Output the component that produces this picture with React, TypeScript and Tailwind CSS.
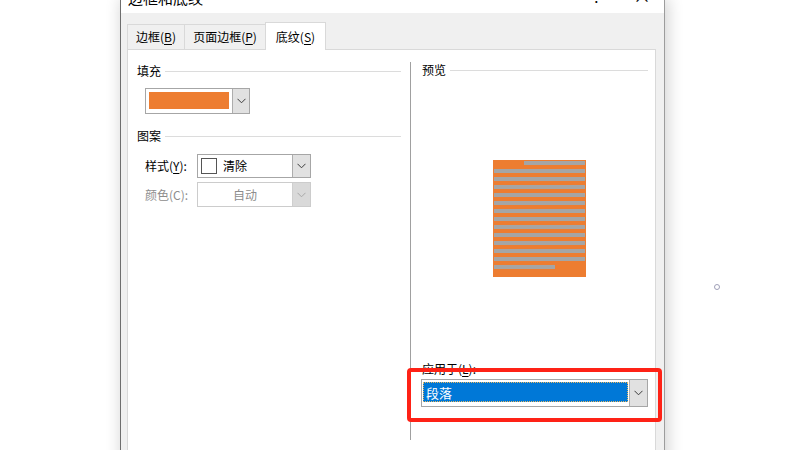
import React from 'react';

function Chevron({ light = false }: { light?: boolean }) {
  return (
    <svg width="9" height="6" viewBox="0 0 9 6" className="block">
      <polyline
        points="0.5,0.8 4.5,4.8 8.5,0.8"
        fill="none"
        stroke={light ? '#a8a8a8' : '#3c3c3c'}
        strokeWidth="1"
      />
    </svg>
  );
}

function SectionHeader({ label, indent, right }: { label: string; indent: string; right: string }) {
  return (
    <div className={`flex items-center h-4 ${indent} ${right}`}>
      <span className="text-[12px] leading-4 text-black">{label}</span>
      <div className="flex-1 h-px bg-[#dcdcdc] ml-1" />
    </div>
  );
}

function ComboButton({ disabled = false }: { disabled?: boolean }) {
  return (
    <div
      className={`w-[18px] flex items-center justify-center border-l ${
        disabled ? 'bg-[#d9d9d9] border-[#cfcfcf]' : 'bg-[#e1e1e1] border-[#adadad]'
      }`}
    >
      <Chevron light={disabled} />
    </div>
  );
}

export default function App() {
  return (
    <div className="relative w-[800px] h-[450px] overflow-hidden bg-white font-['Noto_Sans_CJK_SC',sans-serif]">
      <div className="ml-[120px] w-[545px] h-[480px] flex flex-col bg-[#f0f0f0] border-l border-l-[#6e6e6e] border-r border-r-[#9c9c9c] shadow-[2px_0_14px_2px_rgba(0,0,0,0.16)]">
        {/* title bar, cut off at the top */}
        <div className="h-[13px] bg-white overflow-hidden flex items-end relative">
          <span className="ml-[7px] text-[15px] leading-[20px] text-black mb-[5px]">边框和底纹</span>
          <span className="ml-auto text-[15px] leading-[20px] text-black mb-[6px] mr-[33px]">?</span>
          <span className="text-[18px] leading-[20px] text-black mb-[8px] mr-[13px]">×</span>
        </div>

        <div className="flex-1 flex flex-col pl-[6px] pr-[8px] pt-[9px]">
          {/* tabs */}
          <div className="flex items-end h-[27px] text-[12px] text-black">
            <div className="w-[57px] h-[25px] flex items-center justify-center border-l border-t border-[#d9d9d9]">
              边框(<span className="underline underline-offset-2">B</span>)
            </div>
            <div className="w-[81px] h-[25px] flex items-center justify-center border-l border-t border-[#d9d9d9]">
              页面边框(<span className="underline underline-offset-2">P</span>)
            </div>
            <div className="relative z-10 -mb-px w-[61px] h-[28px] flex items-center justify-center bg-white border-l border-t border-r border-[#d9d9d9]">
              底纹(<span className="underline underline-offset-2">S</span>)
            </div>
          </div>

          {/* panel */}
          <div className="flex-1 flex bg-white border border-[#d9d9d9]">
            {/* left column */}
            <div className="w-[282px] flex flex-col pt-[13px]">
              <SectionHeader label="填充" indent="ml-[9px]" right="mr-[9px]" />
              <div className="ml-[17px] mt-[9px] w-[105px] h-[26px] flex border border-[#a6a6a6]">
                <div className="flex-1 p-[3px] pb-[4px]">
                  <div className="w-[80px] h-full bg-[#ed7d31]" />
                </div>
                <ComboButton />
              </div>

              <div className="mt-[14px]">
                <SectionHeader label="图案" indent="ml-[9px]" right="mr-[9px]" />
              </div>

              <div className="mt-[10px] ml-[17px] flex items-center h-[24px]">
                <span className="w-[52px] text-[12px] text-black">
                  样式(<span className="underline underline-offset-2">Y</span>):
                </span>
                <div className="w-[114px] h-full flex border border-[#a6a6a6]">
                  <div className="flex-1 flex items-center pl-[3px]">
                    <div className="w-[16px] h-[16px] border border-[#555555] bg-white" />
                    <span className="ml-[6px] text-[12px] text-black">清除</span>
                  </div>
                  <ComboButton />
                </div>
              </div>

              <div className="mt-[4px] ml-[17px] flex items-center h-[25px]">
                <span className="w-[52px] text-[12px] text-[#8d8d8d]">颜色(C):</span>
                <div className="w-[114px] h-full flex border border-[#cccccc]">
                  <div className="flex-1 flex items-center justify-center">
                    <span className="text-[12px] text-[#8d8d8d]">自动</span>
                  </div>
                  <ComboButton disabled />
                </div>
              </div>
            </div>

            {/* right column */}
            <div className="mt-[12px] h-[378px] w-[245px] flex flex-col border-l border-[#a0a0a0]">
              <div className="pl-[11px]">
                <SectionHeader label="预览" indent="" right="mr-[7px]" />
              </div>

              <div className="mt-[82px] ml-[82px] w-[93px] h-[117px] bg-[#ed7d31] pt-px px-px flex flex-col gap-[4px]">
                <div className="h-[4px] ml-[30px] bg-[#a5a5a5]" />
                {Array.from({ length: 12 }).map((_, i) => (
                  <div key={i} className="h-[4px] bg-[#a5a5a5]" />
                ))}
                <div className="h-[4px] w-[61px] bg-[#a5a5a5]" />
              </div>

              <span className="mt-[84px] ml-[11px] text-[12px] leading-4 text-black">
                应用于(<span className="underline underline-offset-2">L</span>):
              </span>

              <div className="mt-[2px] ml-[10px] w-[227px] h-[28px] flex border border-[#a6a6a6]">
                <div className="flex-1 pl-[1px] pt-[2px] pr-px">
                  <div className="h-[20px] bg-[#0078d7] border border-dotted border-[#e8b860] flex items-center pl-[2px]">
                    <span className="text-[13px] text-white leading-none">段落</span>
                  </div>
                </div>
                <ComboButton />
              </div>
            </div>
          </div>
        </div>
      </div>

      {/* red highlight annotation */}
      <div className="absolute left-[407px] top-[368px] w-[255px] h-[54px] border-[4px] border-[#fe2216] rounded-[4px]" />

      {/* stray marker */}
      <div className="absolute left-[714px] top-[284px] w-[6px] h-[6px] rounded-full border border-[#a0a0b8]" />
    </div>
  );
}
